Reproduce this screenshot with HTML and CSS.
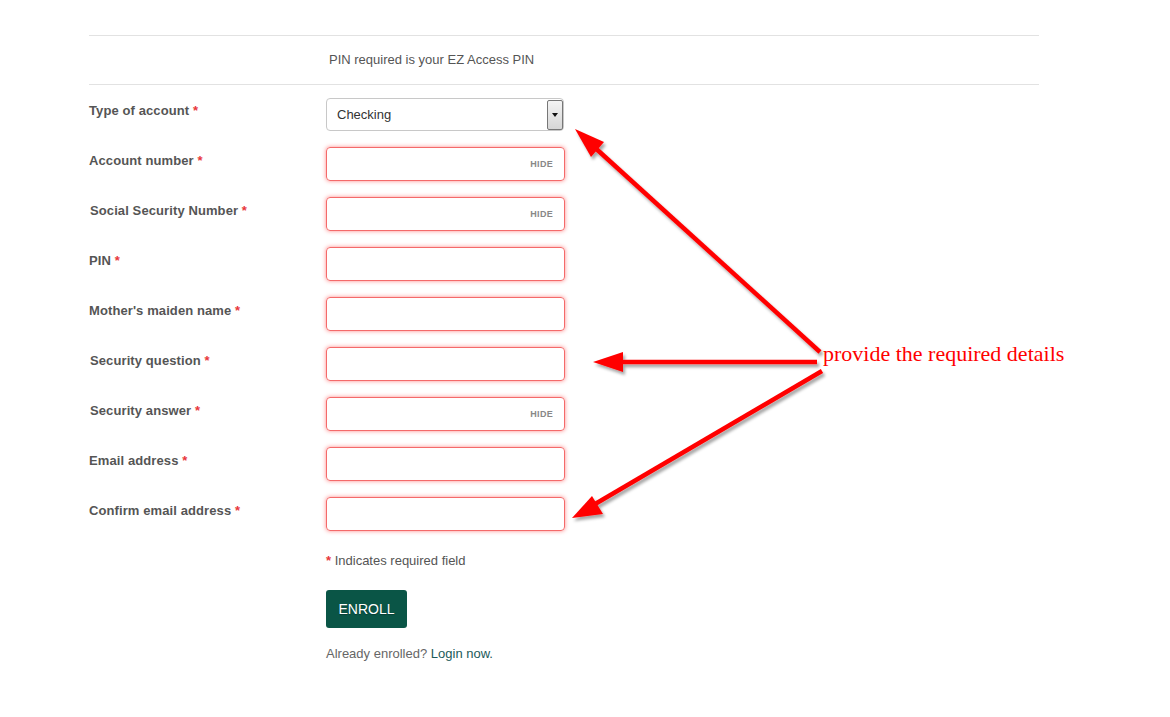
FILE: index.html
```html
<!DOCTYPE html>
<html>
<head>
<meta charset="utf-8">
<link rel="stylesheet" href="styles.css">
</head>
<body>
<div class="page">
  <div class="info">PIN required is your EZ Access PIN</div>
  <form class="form">
    <div class="row">
      <label class="label">Type of account <span class="req">*</span></label>
      <div class="select"><span>Checking</span><span class="drop"><span class="tri"></span></span></div>
    </div>
    <div class="row">
      <label class="label">Account number <span class="req">*</span></label>
      <div class="input"><span class="hide">HIDE</span></div>
    </div>
    <div class="row">
      <label class="label ssn">Social Security Number <span class="req">*</span></label>
      <div class="input"><span class="hide">HIDE</span></div>
    </div>
    <div class="row">
      <label class="label">PIN <span class="req">*</span></label>
      <div class="input"></div>
    </div>
    <div class="row">
      <label class="label">Mother's maiden name <span class="req">*</span></label>
      <div class="input"></div>
    </div>
    <div class="row">
      <label class="label ssn">Security question <span class="req">*</span></label>
      <div class="input"></div>
    </div>
    <div class="row">
      <label class="label ssn">Security answer <span class="req">*</span></label>
      <div class="input"><span class="hide">HIDE</span></div>
    </div>
    <div class="row">
      <label class="label">Email address <span class="req">*</span></label>
      <div class="input"></div>
    </div>
    <div class="row">
      <label class="label">Confirm email address <span class="req">*</span></label>
      <div class="input"></div>
    </div>
    <div class="footer">
      <p class="note"><span class="req">*</span> Indicates required field</p>
      <button type="button" class="btn">ENROLL</button>
      <p class="already">Already enrolled? <a href="#" class="login">Login now.</a></p>
    </div>
  </form>
</div>

<svg class="arrows" width="1170" height="717" viewBox="0 0 1170 717">
  <defs>
    <filter id="sh" x="-20%" y="-20%" width="140%" height="140%">
      <feDropShadow dx="2" dy="3" stdDeviation="1.6" flood-color="#000" flood-opacity="0.35"/>
    </filter>
  </defs>
  <g filter="url(#sh)" fill="#ff0000" stroke="#ff0000">
    <line x1="820" y1="352" x2="592" y2="145" stroke-width="4.5"/>
    <polygon points="575,129 604,142 591,157" stroke="none"/>
    <line x1="817" y1="362" x2="612" y2="362" stroke-width="4.5"/>
    <polygon points="593,362 623,352 623,372" stroke="none"/>
    <line x1="822" y1="371" x2="590" y2="507" stroke-width="4.5"/>
    <polygon points="572,518 592,496 603,514" stroke="none"/>
  </g>
</svg>
<div class="callout">provide the required details</div>
</body>
</html>
```

FILE: styles.css
```css
html, body {
  margin: 0;
  padding: 0;
  background: #fff;
}
body {
  font-family: "Liberation Sans", Arial, sans-serif;
  font-size: 13px;
  color: #555;
  position: relative;
  width: 1170px;
  height: 717px;
  overflow: hidden;
}
.page {
  margin: 35px 0 0 89px;
  width: 950px;
}
.info {
  border-top: 1px solid #e2e2e2;
  border-bottom: 1px solid #e2e2e2;
  height: 48px;
  line-height: 48px;
  padding-left: 240px;
  color: #555;
}
.form {
  margin-top: 12px;
}
.row {
  display: flex;
  height: 50px;
}
.label {
  width: 237px;
  font-weight: bold;
  line-height: 15px;
  padding-top: 6px;
  color: #555;
  letter-spacing: 0.1px;
}
.label.ssn {
  padding-left: 1px;
  width: 236px;
}
.req {
  color: #e8373b;
  font-weight: bold;
}
.select {
  margin-top: 1px;
  border: 1px solid #c8c8c8;
  border-radius: 4px;
  display: flex;
  align-items: center;
  justify-content: space-between;
  padding-left: 10px;
  box-sizing: border-box;
  width: 238px;
  height: 33px;
  color: #333;
}
.drop {
  width: 16px;
  height: 30px;
  border: 1px solid #777;
  border-radius: 2px;
  box-sizing: border-box;
  background: linear-gradient(#f4f4f4, #d6d6d6);
  display: flex;
  align-items: center;
  justify-content: center;
}
.tri {
  width: 0;
  height: 0;
  border-left: 3.5px solid transparent;
  border-right: 3.5px solid transparent;
  border-top: 4px solid #111;
}
.input {
  width: 239px;
  height: 34px;
  box-sizing: border-box;
  border: 1px solid #f46a6a;
  border-radius: 4px;
  box-shadow: 0 0 4px rgba(255, 60, 60, 0.6);
  display: flex;
  align-items: center;
  justify-content: flex-end;
  padding-right: 11px;
}
.hide {
  font-size: 9px;
  font-weight: bold;
  color: #888;
  letter-spacing: 0.3px;
}
.footer {
  padding-left: 237px;
}
.note {
  margin: 6px 0 0;
  line-height: 15px;
  color: #555;
}
.btn {
  display: block;
  margin-top: 22px;
  height: 38px;
  width: 81px;
  border: none;
  border-radius: 3px;
  background: #0a5546;
  color: #fff;
  font-family: "Liberation Sans", Arial, sans-serif;
  font-size: 14px;
  padding: 0;
  text-shadow: 0 1px 1px rgba(0,0,0,0.3);
}
.already {
  margin: 18px 0 0;
  line-height: 15px;
  color: #666;
}
.login {
  color: #1c5a5a;
  text-decoration: none;
}
.arrows {
  position: absolute;
  left: 0;
  top: 0;
  pointer-events: none;
}
.callout {
  position: absolute;
  left: 823px;
  top: 341px;
  font-family: "Liberation Serif", "Times New Roman", serif;
  font-size: 22px;
  line-height: 26px;
  color: #ff0000;
  white-space: nowrap;
}
```
